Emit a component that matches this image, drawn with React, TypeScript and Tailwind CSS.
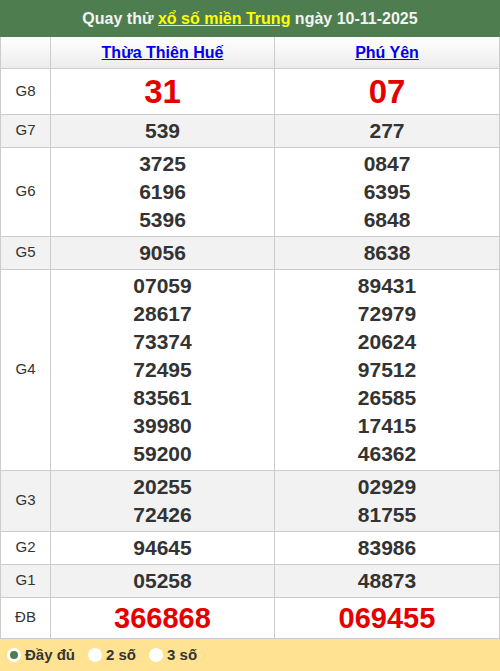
const rows: { label: string; a: string[]; b: string[]; kind?: "g8" | "db"; alt?: boolean }[] = [
  { label: "G8", a: ["31"], b: ["07"], kind: "g8" },
  { label: "G7", a: ["539"], b: ["277"], alt: true },
  { label: "G6", a: ["3725", "6196", "5396"], b: ["0847", "6395", "6848"] },
  { label: "G5", a: ["9056"], b: ["8638"], alt: true },
  {
    label: "G4",
    a: ["07059", "28617", "73374", "72495", "83561", "39980", "59200"],
    b: ["89431", "72979", "20624", "97512", "26585", "17415", "46362"],
  },
  { label: "G3", a: ["20255", "72426"], b: ["02929", "81755"], alt: true },
  { label: "G2", a: ["94645"], b: ["83986"] },
  { label: "G1", a: ["05258"], b: ["48873"], alt: true },
  { label: "ĐB", a: ["366868"], b: ["069455"], kind: "db" },
];

function Cell({ nums, kind }: { nums: string[]; kind?: "g8" | "db" }) {
  const cls =
    kind === "g8"
      ? "text-[33px] leading-[41px] text-[#e50000]"
      : kind === "db"
        ? "text-[29px] leading-[36px] text-[#e50000]"
        : "text-[21px] leading-[28px] text-[#333]";
  return (
    <td className="border border-[#ccc] py-[2px] text-center align-middle">
      {nums.map((n) => (
        <div key={n} className={`font-bold ${cls}`}>
          {n}
        </div>
      ))}
    </td>
  );
}

export default function App() {
  return (
    <div className="w-[500px] bg-white font-['Liberation_Sans',Arial,sans-serif]">
      <div className="flex h-[37px] items-center justify-center bg-[#4e7d50] text-[16px] font-bold text-[#f3f3f3]">
        <span>Quay thử&nbsp;</span>
        <a className="text-[#ffff00] underline">xổ số miền Trung</a>
        <span>&nbsp;ngày 10-11-2025</span>
      </div>
      <table className="w-full border-collapse table-fixed">
        <colgroup>
          <col className="w-[50px]" />
          <col className="w-[224px]" />
          <col />
        </colgroup>
        <thead>
          <tr className="h-[31px] bg-gradient-to-b from-white to-[#ececec]">
            <th className="border border-t-0 border-[#ccc]"></th>
            <th className="border border-t-0 border-[#ccc] pt-[1px] text-[16px] font-bold">
              <a className="text-[#0000ee] underline">Thừa Thiên Huế</a>
            </th>
            <th className="border border-t-0 border-[#ccc] pt-[1px] text-[16px] font-bold">
              <a className="text-[#0000ee] underline">Phú Yên</a>
            </th>
          </tr>
        </thead>
        <tbody>
          {rows.map((r) => (
            <tr key={r.label} className={r.alt ? "bg-[#f2f2f2]" : "bg-white"}>
              <td className="border border-[#ccc] text-center align-middle text-[15px] text-[#333]">{r.label}</td>
              <Cell nums={r.a} kind={r.kind} />
              <Cell nums={r.b} kind={r.kind} />
            </tr>
          ))}
        </tbody>
      </table>
      <div className="flex h-[33px] items-center gap-[13px] bg-[#ffe392] pl-[7px] text-[15px] font-bold text-[#333]">
        <label className="flex items-center gap-[4px]">
          <span className="flex h-[14px] w-[14px] items-center justify-center rounded-full bg-white">
            <span className="h-[8px] w-[8px] rounded-full bg-[#4e7d50]" />
          </span>
          Đầy đủ
        </label>
        <label className="flex items-center gap-[4px]">
          <span className="h-[14px] w-[14px] rounded-full bg-white" />
          2 số
        </label>
        <label className="flex items-center gap-[4px]">
          <span className="h-[14px] w-[14px] rounded-full bg-white" />
          3 số
        </label>
      </div>
    </div>
  );
}
